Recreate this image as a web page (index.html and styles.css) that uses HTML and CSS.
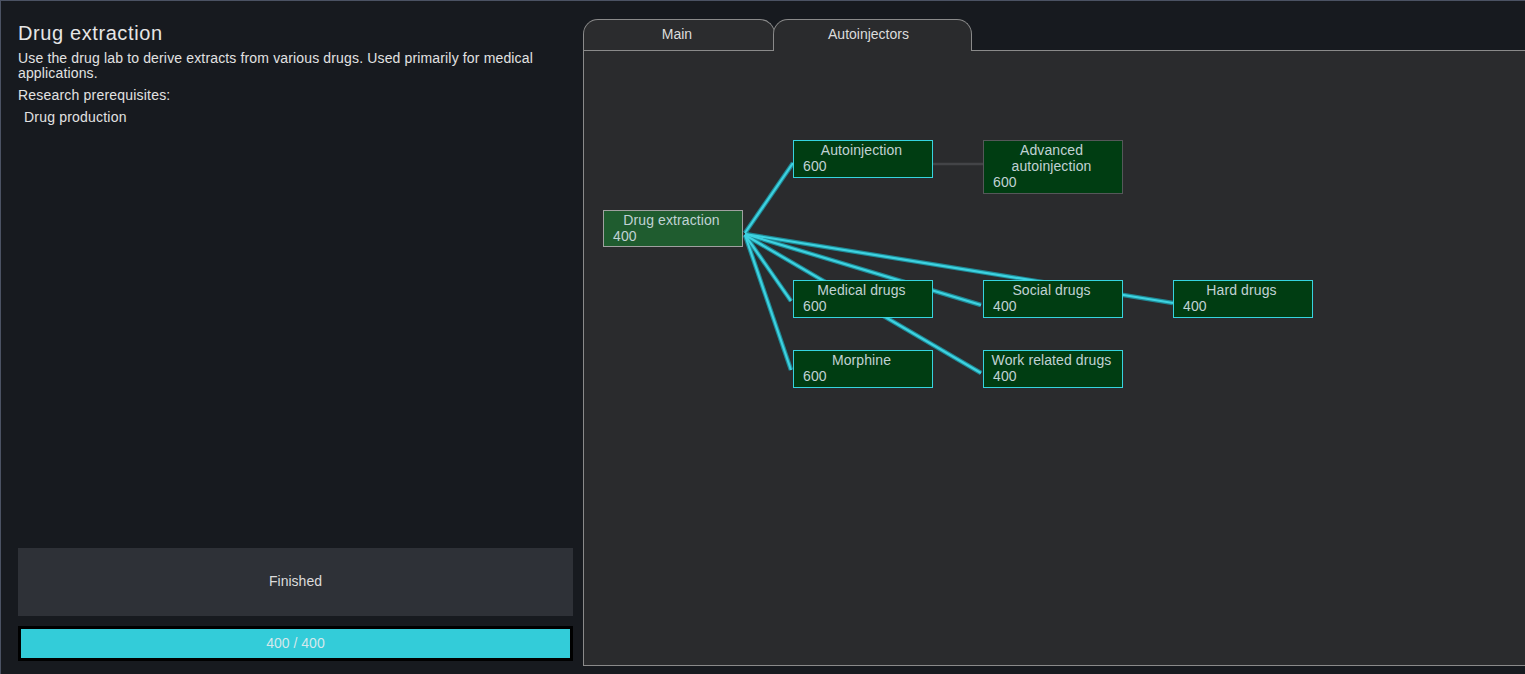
FILE: index.html
```html
<!DOCTYPE html>
<html>
<head>
<meta charset="utf-8">
<link rel="stylesheet" href="styles.css">
</head>
<body>
<div class="app">
  <aside class="info">
    <h1 class="title">Drug extraction</h1>
    <p class="desc">Use the drug lab to derive extracts from various drugs. Used primarily for medical applications.</p>
    <p class="prereq-label">Research prerequisites:</p>
    <p class="prereq">Drug production</p>
    <div class="status">Finished</div>
    <div class="progress"><div class="progress-fill">400 / 400</div></div>
  </aside>
  <main class="tree">
    <div class="tabs">
      <div class="tab">Main</div>
      <div class="tab tab-active">Autoinjectors</div>
    </div>
    <div class="canvas">
      <svg class="links" width="941" height="614" viewBox="0 0 941 614">
        <line class="link-dim" x1="349" y1="113" x2="399" y2="113"/>
        <g class="link-outer">
          <line x1="161" y1="182" x2="209" y2="112"/>
          <line x1="161" y1="183" x2="589" y2="252"/>
          <line x1="161" y1="183" x2="397" y2="254"/>
          <line x1="161" y1="184" x2="397" y2="322"/>
          <line x1="161" y1="184" x2="207" y2="250"/>
          <line x1="161" y1="184" x2="207" y2="319"/>
        </g>
        <g class="link-inner">
          <line x1="161" y1="182" x2="209" y2="112"/>
          <line x1="161" y1="183" x2="589" y2="252"/>
          <line x1="161" y1="183" x2="397" y2="254"/>
          <line x1="161" y1="184" x2="397" y2="322"/>
          <line x1="161" y1="184" x2="207" y2="250"/>
          <line x1="161" y1="184" x2="207" y2="319"/>
        </g>
      </svg>
      <div class="node node-done" style="left:19px;top:159px"><div class="node-name">Drug extraction</div><div class="node-cost">400</div></div>
      <div class="node node-open" style="left:209px;top:89px"><div class="node-name">Autoinjection</div><div class="node-cost">600</div></div>
      <div class="node node-locked" style="left:399px;top:89px"><div class="node-name">Advanced<br>autoinjection</div><div class="node-cost">600</div></div>
      <div class="node node-open" style="left:209px;top:229px"><div class="node-name">Medical drugs</div><div class="node-cost">600</div></div>
      <div class="node node-open" style="left:399px;top:229px"><div class="node-name">Social drugs</div><div class="node-cost">400</div></div>
      <div class="node node-open" style="left:589px;top:229px"><div class="node-name">Hard drugs</div><div class="node-cost">400</div></div>
      <div class="node node-open" style="left:209px;top:299px"><div class="node-name">Morphine</div><div class="node-cost">600</div></div>
      <div class="node node-open" style="left:399px;top:299px"><div class="node-name">Work related drugs</div><div class="node-cost">400</div></div>
    </div>
  </main>
</div>
</body>
</html>
```
FILE: styles.css
```css
* { box-sizing: border-box; }
html, body {
  margin: 0;
  padding: 0;
  background: #171a1f;
  font-family: "Liberation Sans", Arial, sans-serif;
  overflow: hidden;
}
.app {
  display: flex;
  width: 1525px;
  height: 674px;
  border-top: 1px solid #4b5263;
  border-left: 1px solid #4b5263;
  background: #171a1f;
}
.info {
  width: 582px;
  flex: none;
  display: flex;
  flex-direction: column;
  padding: 20px 10px 13px 17px;
  color: #e0e0e0;
}
.title {
  margin: 0;
  font-size: 20px;
  line-height: 24px;
  letter-spacing: 0.6px;
  font-weight: normal;
  color: #e6e6e6;
}
.desc {
  margin: 6px 0 0;
  font-size: 14px;
  line-height: 15px;
  letter-spacing: 0.15px;
  color: #e2e2e2;
}
.prereq-label {
  margin: 7px 0 0;
  font-size: 14px;
  line-height: 15px;
  letter-spacing: 0.2px;
  color: #e2e2e2;
}
.prereq {
  margin: 7px 0 0;
  padding-left: 6px;
  font-size: 14px;
  line-height: 15px;
  letter-spacing: 0.2px;
  color: #e2e2e2;
}
.status {
  margin-top: auto;
  height: 68px;
  padding-bottom: 2px;
  background: #2e3137;
  display: flex;
  align-items: center;
  justify-content: center;
  font-size: 14px;
  color: #dcdcdc;
}
.progress {
  margin-top: 10px;
  height: 35px;
  border: 3px solid #000;
  background: #000;
}
.progress-fill {
  height: 100%;
  padding-bottom: 2px;
  background: #33ccd9;
  display: flex;
  align-items: center;
  justify-content: center;
  font-size: 14px;
  color: #d4e8ec;
}
.tree {
  flex: 1;
  display: flex;
  flex-direction: column;
  padding-top: 18px;
  padding-bottom: 8px;
  min-width: 0;
}
.tabs {
  display: flex;
  align-items: flex-end;
  height: 31px;
  flex: none;
}
.tab {
  height: 31px;
  width: 192px;
  border: 1px solid #8a8a8a;
  border-bottom: none;
  border-radius: 15px 15px 0 0;
  background: #2b2c2e;
  color: #dcdcdc;
  font-size: 14px;
  display: flex;
  align-items: center;
  justify-content: center;
  padding-right: 4px;
  padding-bottom: 2px;
}
.tab-active {
  width: 199px;
  margin-left: -2px;
  height: 32px;
  margin-bottom: -1px;
  padding-bottom: 3px;
  position: relative;
  z-index: 2;
  background: #2a2b2d;
  padding-right: 8px;
}
.canvas {
  flex: 1;
  position: relative;
  border: 1px solid #8a8a8a;
  border-right: none;
  background: #2a2b2d;
  overflow: hidden;
}
.links {
  position: absolute;
  left: 0;
  top: 0;
}
.link-dim {
  stroke: #434447;
  stroke-width: 2.5;
}
.link-outer line {
  stroke: #1f8a96;
  stroke-width: 4.5;
}
.link-inner line {
  stroke: #3dd2e0;
  stroke-width: 2.2;
}
.node {
  position: absolute;
  width: 140px;
  padding: 1px 0 3px;
  border: 1px solid #36d4e0;
  background: #003d12;
  font-size: 14px;
  line-height: 16px;
  letter-spacing: 0.1px;
  color: #c0d2d4;
  z-index: 1;
}
.node-done {
  background: #1f5c2f;
  border-color: #a0a0a0;
  height: 37px;
}
.node-locked {
  border-color: #555759;
}
.node-name {
  text-align: center;
  padding-right: 3px;
  white-space: nowrap;
}
.node-cost {
  padding-left: 9px;
}
```
